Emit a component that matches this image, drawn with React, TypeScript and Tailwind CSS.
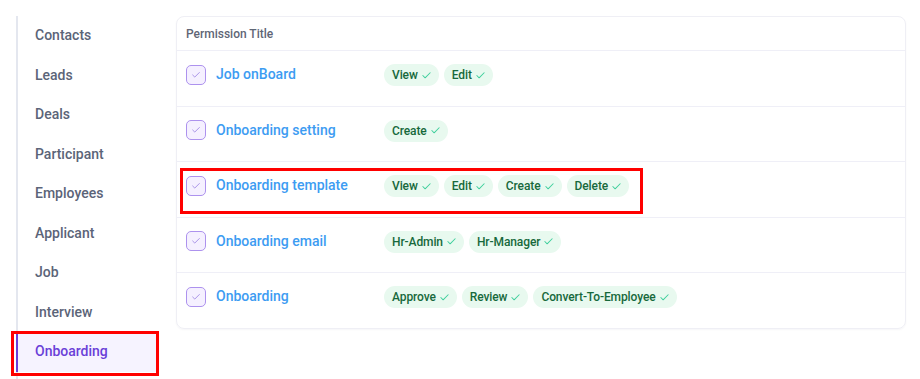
import { Check } from 'lucide-react'

const menu = ['Contacts', 'Leads', 'Deals', 'Participant', 'Employees', 'Applicant', 'Job', 'Interview', 'Onboarding']

const rows = [
  { title: 'Job onBoard', perms: ['View', 'Edit'] },
  { title: 'Onboarding setting', perms: ['Create'] },
  { title: 'Onboarding template', perms: ['View', 'Edit', 'Create', 'Delete'], marked: true },
  { title: 'Onboarding email', perms: ['Hr-Admin', 'Hr-Manager'] },
  { title: 'Onboarding', perms: ['Approve', 'Review', 'Convert-To-Employee'] },
]

function Badge({ label }: { label: string }) {
  return (
    <span className="flex h-[22px] items-center gap-[3px] rounded-full bg-[#e8f9ef] pl-2 pr-[7px] text-[12px] font-medium tracking-[-0.1px] text-[#17693c]">
      {label}
      <Check className="h-[11px] w-[11px] text-[#3fcf9c]" strokeWidth={2.2} />
    </span>
  )
}

export default function App() {
  return (
    <div className="flex min-h-[379px] bg-white pt-4 pl-4 font-['Roboto',sans-serif]">
      {/* side menu */}
      <div className="h-[363px] w-[141px] shrink-0 border-l-2 border-[#e4e7ef]">
        {menu.map((item) => {
          const active = item === 'Onboarding'
          return (
            <div
              key={item}
              className={
                active
                  ? 'relative -ml-[2px] flex h-[39.5px] items-center border-l-2 border-[#6a3fd8] bg-[#f6f3ff] pl-[17px] text-[14px] font-medium text-[#6a3fd8]'
                  : 'flex h-[39.5px] items-center pl-[17px] text-[14px] font-medium text-[#5b6478]'
              }
            >
              {item}
              {active && <div className="absolute -left-[7px] -right-[2px] -top-[1px] -bottom-[4px] border-[3px] border-[#ff0000]" />}
            </div>
          )
        })}
      </div>

      {/* permissions table */}
      <div className="ml-[19px] h-[312.5px] w-[730px] rounded-lg border border-[#efeff5] shadow-[0_1px_2px_rgba(30,30,80,0.04)]">
        <div className="flex h-[33px] items-center px-[9px] text-[12px] font-medium text-[#5f6676]">Permission Title</div>
        {rows.map((row) => (
          <div key={row.title} className="relative flex h-[55.5px] items-start border-t border-[#efeff7] px-[9px] pt-[13px]">
            <div className="flex w-[198px] shrink-0 items-center gap-[10px]">
              <span className="flex h-5 w-5 items-center justify-center rounded-[5px] border-[1.5px] border-[#ad92ee] bg-[#f5f0ff]">
                <Check className="h-[10px] w-[10px] text-[#9a82e2]" strokeWidth={2} />
              </span>
              <span className="text-[14px] font-medium text-[#3d9cf2]">{row.title}</span>
            </div>
            <div className="flex items-center gap-[5px]">
              {row.perms.map((p) => (
                <Badge key={p} label={p} />
              ))}
            </div>
            {row.marked && <div className="absolute left-[3px] top-[6px] h-[46px] w-[463px] border-[3px] border-[#ff0000]" />}
          </div>
        ))}
      </div>
    </div>
  )
}
